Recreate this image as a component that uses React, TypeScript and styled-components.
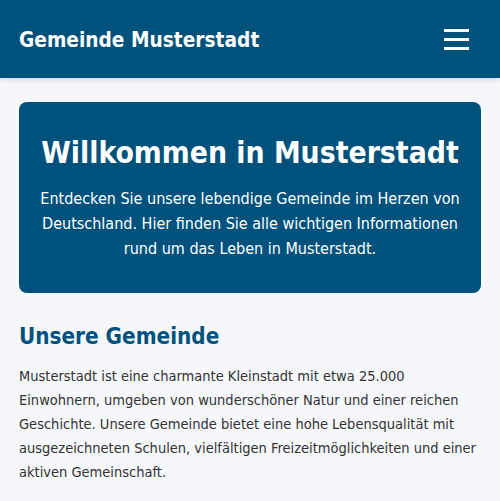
import React from "react";
import styled, { createGlobalStyle } from "styled-components";

const Global = createGlobalStyle`
  * { box-sizing: border-box; }
  html, body { margin: 0; padding: 0; }
  body {
    background: #f5f7fa;
    font-family: "DejaVu Sans Condensed", "DejaVu Sans", sans-serif;
    color: #333;
  }
`;

const Header = styled.header`
  background: #00527c;
  height: 78px;
  display: flex;
  align-items: center;
  justify-content: space-between;
  padding: 0 31px 0 19px;
  box-shadow: 0 2px 5px rgba(0, 0, 0, 0.12);
`;

const Logo = styled.div`
  color: #fff;
  font-weight: bold;
  font-size: 20.7px;
  margin-top: 2px;
`;

const MenuButton = styled.button`
  background: none;
  border: none;
  padding: 0;
  width: 25px;
  height: 21px;
  display: flex;
  flex-direction: column;
  justify-content: space-between;
  cursor: pointer;
`;

const Bar = styled.span`
  display: block;
  height: 3px;
  background: #fff;
`;

const Main = styled.main`
  padding: 24px 19px;
`;

const Hero = styled.section`
  background: #00527c;
  color: #fff;
  border-radius: 8px;
  padding: 33px 20px 32px;
  text-align: center;
`;

const HeroTitle = styled.h1`
  margin: 0 0 16px;
  font-size: 29.8px;
  font-weight: bold;
`;

const HeroText = styled.p`
  margin: 0;
  font-size: 16px;
  line-height: 25px;
`;

const Section = styled.section`
  margin-top: 30px;
`;

const SectionTitle = styled.h2`
  margin: 0 0 15px;
  color: #00527c;
  font-size: 22.3px;
  font-weight: bold;
`;

const Text = styled.p`
  margin: 0;
  font-size: 14.5px;
  line-height: 24px;
  color: #333;
`;

export default function App() {
  return (
    <>
      <Global />
      <Header>
        <Logo>Gemeinde Musterstadt</Logo>
        <MenuButton aria-label="Menü">
          <Bar />
          <Bar />
          <Bar />
        </MenuButton>
      </Header>
      <Main>
        <Hero>
          <HeroTitle>Willkommen in Musterstadt</HeroTitle>
          <HeroText>
            Entdecken Sie unsere lebendige Gemeinde im Herzen von Deutschland. Hier finden Sie alle wichtigen
            Informationen rund um das Leben in Musterstadt.
          </HeroText>
        </Hero>
        <Section>
          <SectionTitle>Unsere Gemeinde</SectionTitle>
          <Text>
            Musterstadt ist eine charmante Kleinstadt mit etwa 25.000 Einwohnern, umgeben von wunderschöner Natur
            und einer reichen Geschichte. Unsere Gemeinde bietet eine hohe Lebensqualität mit ausgezeichneten
            Schulen, vielfältigen Freizeitmöglichkeiten und einer aktiven Gemeinschaft.
          </Text>
        </Section>
      </Main>
    </>
  );
}
